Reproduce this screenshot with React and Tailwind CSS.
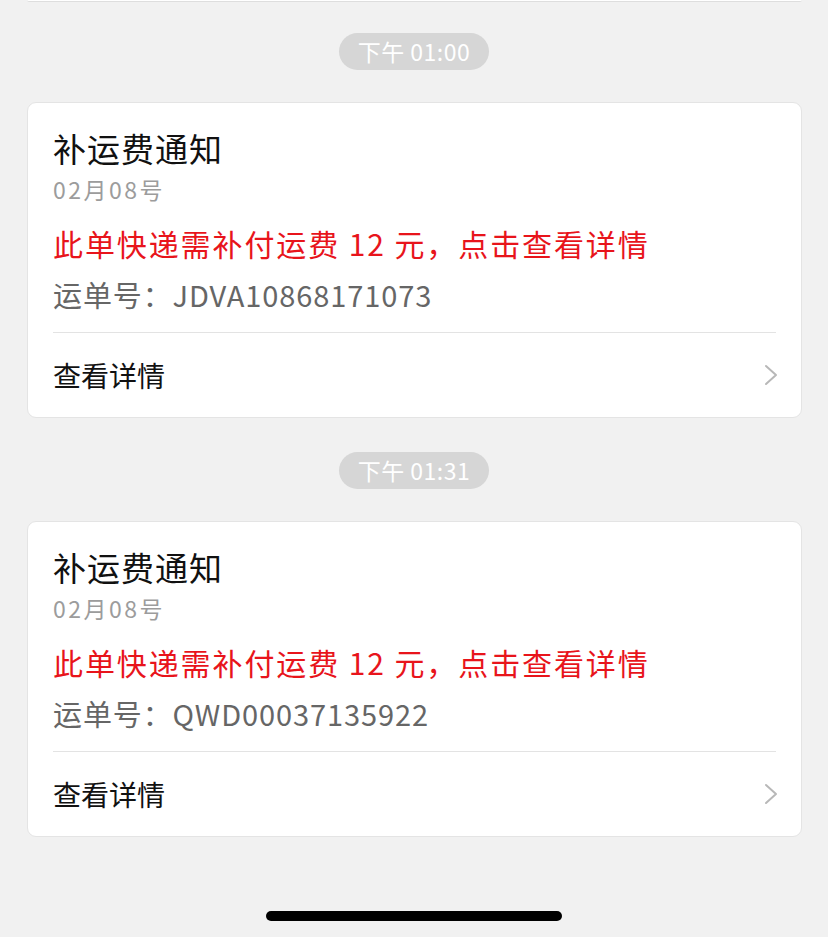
import React from 'react';

const notices = [
  { time: '下午 01:00', tracking: 'JDVA10868171073' },
  { time: '下午 01:31', tracking: 'QWD00037135922' },
];

function Chevron() {
  return (
    <svg width="14" height="22" viewBox="0 0 14 22" fill="none">
      <path d="M2 2 L12 11 L2 20" stroke="#b8b8b8" strokeWidth="2" strokeLinecap="round" strokeLinejoin="round" />
    </svg>
  );
}

function NoticeCard({ tracking }) {
  return (
    <div className="mx-[27px] mr-[26px] bg-white rounded-[9px] border border-[#e4e4e4]">
      <div className="px-[25px]">
        <div className="pt-[25px] text-[33px] leading-[40px] text-[#111] tracking-[1px]">补运费通知</div>
        <div className="mt-[6px] text-[23px] leading-[30px] text-[#9c9c9c] tracking-[2.5px]">02月08号</div>
        <div className="mt-[19px] text-[30px] leading-[40px] text-[#e8141b] tracking-[1.9px]">
          此单快递需补付运费 12 元，点击查看详情
        </div>
        <div className="mt-[11px] text-[29px] leading-[40px] text-[#666] tracking-[0.9px]">运单号：{tracking}</div>
        <div className="mt-[18px] h-px bg-[#e3e3e3]" />
      </div>
      <div className="flex items-center justify-between pl-[25px] pr-[23px] h-[84px]">
        <span className="text-[28px] text-[#111]">查看详情</span>
        <Chevron />
      </div>
    </div>
  );
}

export default function App() {
  return (
    <div
      className="w-[828px] h-[937px] bg-[#f1f1f1] flex flex-col overflow-hidden"
      style={{ fontFamily: '"Noto Sans CJK SC", "Noto Sans", sans-serif' }}
    >
      <div className="mx-[27px] mr-[26px] h-[2px] bg-white border-b border-[#dedede] rounded-b-[9px]" />

      {notices.map((n, i) => (
        <div key={i} className="flex flex-col">
          <div className={`flex justify-center ${i === 0 ? 'mt-[31px]' : 'mt-[34px]'}`}>
            <div className="h-[37px] px-[19px] rounded-full bg-[#d6d6d6] text-white text-[23px] leading-[37px] tracking-[0.5px]">
              {n.time}
            </div>
          </div>
          <div className="mt-[32px]">
            <NoticeCard tracking={n.tracking} />
          </div>
        </div>
      ))}

      <div className="flex-1" />
      <div className="flex justify-center pb-[16px]">
        <div className="w-[296px] h-[10px] rounded-full bg-black" />
      </div>
    </div>
  );
}
